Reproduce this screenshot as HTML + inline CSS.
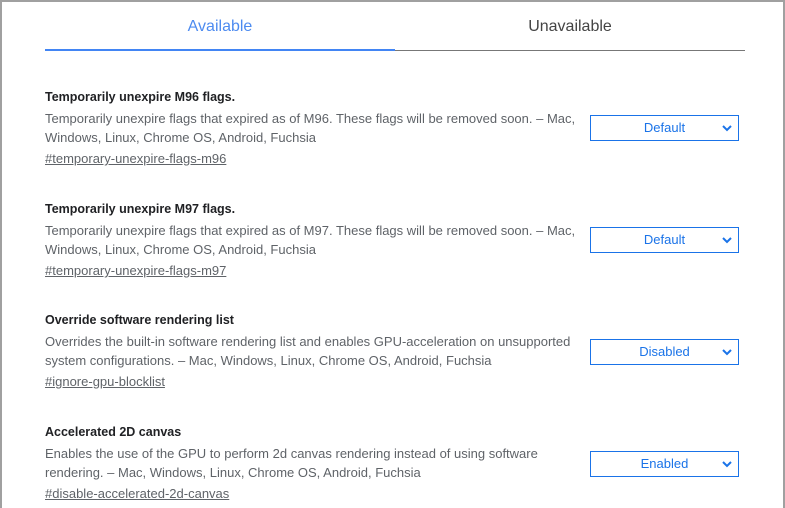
<!DOCTYPE html><html><head><style>
body{margin:0;width:785px;height:508px;overflow:hidden;background:#fff;font-family:"Liberation Sans",Arial,sans-serif}
.frame{position:absolute;left:0;top:0;width:781px;height:506px;border:2px solid #a0a0a0;border-bottom:none}
.tab{position:absolute;top:18px;font-size:16px;width:350px;text-align:center}
.t1{left:45px;color:#4d8bf0}.t2{left:395px;color:#444}
.bl{position:absolute;left:45px;top:49px;width:350px;height:2px;background:#4285f4}
.gl{position:absolute;left:395px;top:50px;width:350px;height:1px;background:#777}
.row{position:absolute;left:45px;width:535px}
.h{font-size:12.5px;font-weight:bold;color:#202124;height:19px;line-height:14px}
.d{font-size:13px;color:#5f6368;line-height:19px}
.l{font-size:13px;color:#5f6368;text-decoration:underline;line-height:19px;margin-top:2px}
.sel{position:absolute;left:590px;width:147px;height:24px;border:1px solid #1a73e8;color:#1a73e8;font-size:13px;line-height:24px;text-align:center}
.sel svg{position:absolute;right:6px;top:9px}
</style></head><body>
<div class="frame"></div>
<div class="tab t1">Available</div><div class="tab t2">Unavailable</div>
<div class="bl"></div><div class="gl"></div>

<div class="row" style="top:90px"><div class="h">Temporarily unexpire M96 flags.</div><div class="d">Temporarily unexpire flags that expired as of M96. These flags will be removed soon. – Mac, Windows, Linux, Chrome OS, Android, Fuchsia</div><div class="l">#temporary-unexpire-flags-m96</div></div>
<div class="sel" style="top:115px">Default<svg width="10" height="7"><path d="M1 1l4 4 4-4" stroke="#1a73e8" stroke-width="2" fill="none"/></svg></div>

<div class="row" style="top:202px"><div class="h">Temporarily unexpire M97 flags.</div><div class="d">Temporarily unexpire flags that expired as of M97. These flags will be removed soon. – Mac, Windows, Linux, Chrome OS, Android, Fuchsia</div><div class="l">#temporary-unexpire-flags-m97</div></div>
<div class="sel" style="top:227px">Default<svg width="10" height="7"><path d="M1 1l4 4 4-4" stroke="#1a73e8" stroke-width="2" fill="none"/></svg></div>

<div class="row" style="top:313px"><div class="h">Override software rendering list</div><div class="d">Overrides the built-in software rendering list and enables GPU-acceleration on unsupported system configurations. – Mac, Windows, Linux, Chrome OS, Android, Fuchsia</div><div class="l">#ignore-gpu-blocklist</div></div>
<div class="sel" style="top:339px">Disabled<svg width="10" height="7"><path d="M1 1l4 4 4-4" stroke="#1a73e8" stroke-width="2" fill="none"/></svg></div>

<div class="row" style="top:425px"><div class="h">Accelerated 2D canvas</div><div class="d">Enables the use of the GPU to perform 2d canvas rendering instead of using software<br>rendering. – Mac, Windows, Linux, Chrome OS, Android, Fuchsia</div><div class="l">#disable-accelerated-2d-canvas</div></div>
<div class="sel" style="top:451px">Enabled<svg width="10" height="7"><path d="M1 1l4 4 4-4" stroke="#1a73e8" stroke-width="2" fill="none"/></svg></div>
</body></html>
